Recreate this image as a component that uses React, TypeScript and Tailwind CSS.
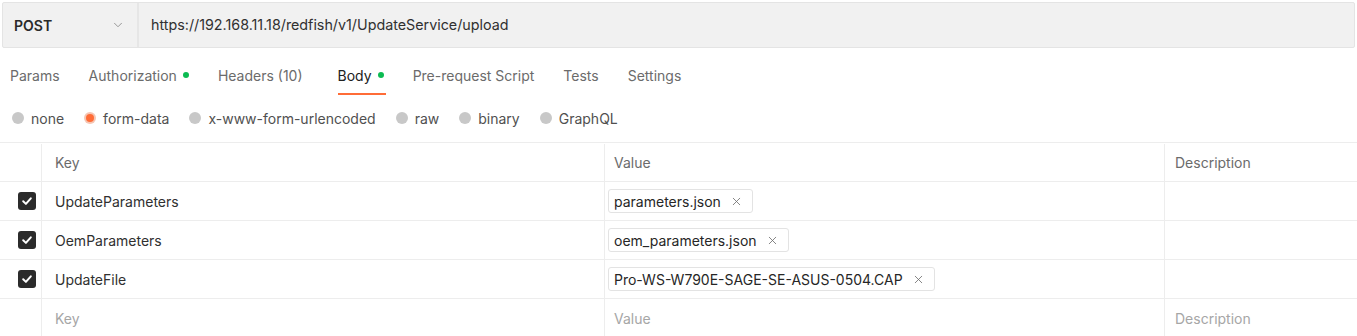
import { X, ChevronDown } from 'lucide-react';

const tabs = [
  { label: 'Params' },
  { label: 'Authorization', dot: true },
  { label: 'Headers (10)' },
  { label: 'Body', dot: true, active: true },
  { label: 'Pre-request Script' },
  { label: 'Tests' },
  { label: 'Settings' },
];

const bodyTypes = ['none', 'form-data', 'x-www-form-urlencoded', 'raw', 'binary', 'GraphQL'];

const rows = [
  { key: 'UpdateParameters', file: 'parameters.json' },
  { key: 'OemParameters', file: 'oem_parameters.json' },
  { key: 'UpdateFile', file: 'Pro-WS-W790E-SAGE-SE-ASUS-0504.CAP' },
];

function CheckBox() {
  return (
    <div className="w-[18px] h-[18px] rounded-[3px] bg-[#2b2b2b] flex items-center justify-center">
      <svg width="12" height="12" viewBox="0 0 12 12" fill="none">
        <path d="M2.2 6.3 L4.9 8.9 L9.8 3.3" stroke="white" strokeWidth="2" strokeLinecap="round" strokeLinejoin="round" />
      </svg>
    </div>
  );
}

function FileChip({ name }: { name: string }) {
  return (
    <div className="inline-flex items-center gap-[9px] h-[24px] pl-[5px] pr-[9px] border border-[#e3e3e3] rounded-[3px] bg-white text-[#262626]">
      <span>{name}</span>
      <X size={13} strokeWidth={1.5} className="text-[#6b6b6b]" />
    </div>
  );
}

export default function App() {
  return (
    <div className="w-[1357px] h-[336px] bg-white overflow-hidden text-[14px] text-[#212121]" style={{ fontFamily: 'Inter, "Noto Sans", sans-serif' }}>
      {/* request bar */}
      <div className="pt-[2px] px-[2px]">
        <div className="flex h-[46px] bg-[#f1f1f1] border border-[#e4e4e4] rounded-[2px]">
          <div className="w-[136px] flex items-center justify-between pl-[11px] pr-[12px] border-r-2 border-[#e6e6e6]">
            <span className="font-semibold text-[#2a2a2a]">POST</span>
            <ChevronDown size={14} strokeWidth={1.5} className="text-[#8a8a8a]" />
          </div>
          <div className="flex items-center pl-[12px] text-[14.3px] text-[#303030]">
            https://192.168.11.18/redfish/v1/UpdateService/upload
          </div>
        </div>
      </div>

      {/* tabs */}
      <div className="flex gap-[29px] pl-[10px] pt-[6px] h-[48px] items-stretch">
        {tabs.map((t) => (
          <div key={t.label} className={'relative flex items-center text-[#6b6b6b] ' + (t.active ? 'ml-[6px]' : '')}>
            <span className={t.active ? 'text-[#212121]' : ''}>{t.label}</span>
            {t.dot && <span className="ml-[6px] w-[6px] h-[6px] rounded-full bg-[#0cbb52]" />}
            {t.active && <span className="absolute left-0 right-[-2px] bottom-[1px] h-[2px] bg-[#ff6c37]" />}
          </div>
        ))}
      </div>

      {/* body type radios */}
      <div className="flex items-center h-[46px] pl-[12px] pb-[2px] gap-[20px] text-[#505050]">
        {bodyTypes.map((b) => (
          <div key={b} className="flex items-center gap-[7px]">
            <span className={'w-[12px] h-[12px] rounded-full flex items-center justify-center ' + (b === 'form-data' ? 'bg-[#f5c6b4]' : 'bg-[#c8c8c8]')}>
              {b === 'form-data' && <span className="w-[8px] h-[8px] rounded-full bg-[#ff6c37]" />}
            </span>
            <span>{b}</span>
          </div>
        ))}
      </div>

      {/* key/value table */}
      <div className="border-t border-[#ededed] pt-[1px]">
        <div className="grid grid-cols-[42px_563px_560px_1fr] h-[38px] border-b border-[#ededed] text-[#6b6b6b]">
          <div className="border-r border-[#ededed]" />
          <div className="flex items-center pl-[13px] border-r border-[#ededed]">Key</div>
          <div className="flex items-center pl-[9px] border-r border-[#ededed]">Value</div>
          <div className="flex items-center pl-[10px]">Description</div>
        </div>
        {rows.map((r) => (
          <div key={r.key} className="grid grid-cols-[42px_563px_560px_1fr] h-[39px] border-b border-[#ededed]">
            <div className="flex items-center pl-[18px] border-r border-[#ededed]">
              <CheckBox />
            </div>
            <div className="flex items-center pl-[13px] border-r border-[#ededed] text-[#303030]">{r.key}</div>
            <div className="flex items-center pl-[3px] border-r border-[#ededed]">
              <FileChip name={r.file} />
            </div>
            <div />
          </div>
        ))}
        <div className="grid grid-cols-[42px_563px_560px_1fr] h-[39px] border-b border-[#ededed] text-[#a6a6a6]">
          <div className="border-r border-[#ededed]" />
          <div className="flex items-center pl-[13px] border-r border-[#ededed]">Key</div>
          <div className="flex items-center pl-[9px] border-r border-[#ededed]">Value</div>
          <div className="flex items-center pl-[10px]">Description</div>
        </div>
      </div>
    </div>
  );
}
